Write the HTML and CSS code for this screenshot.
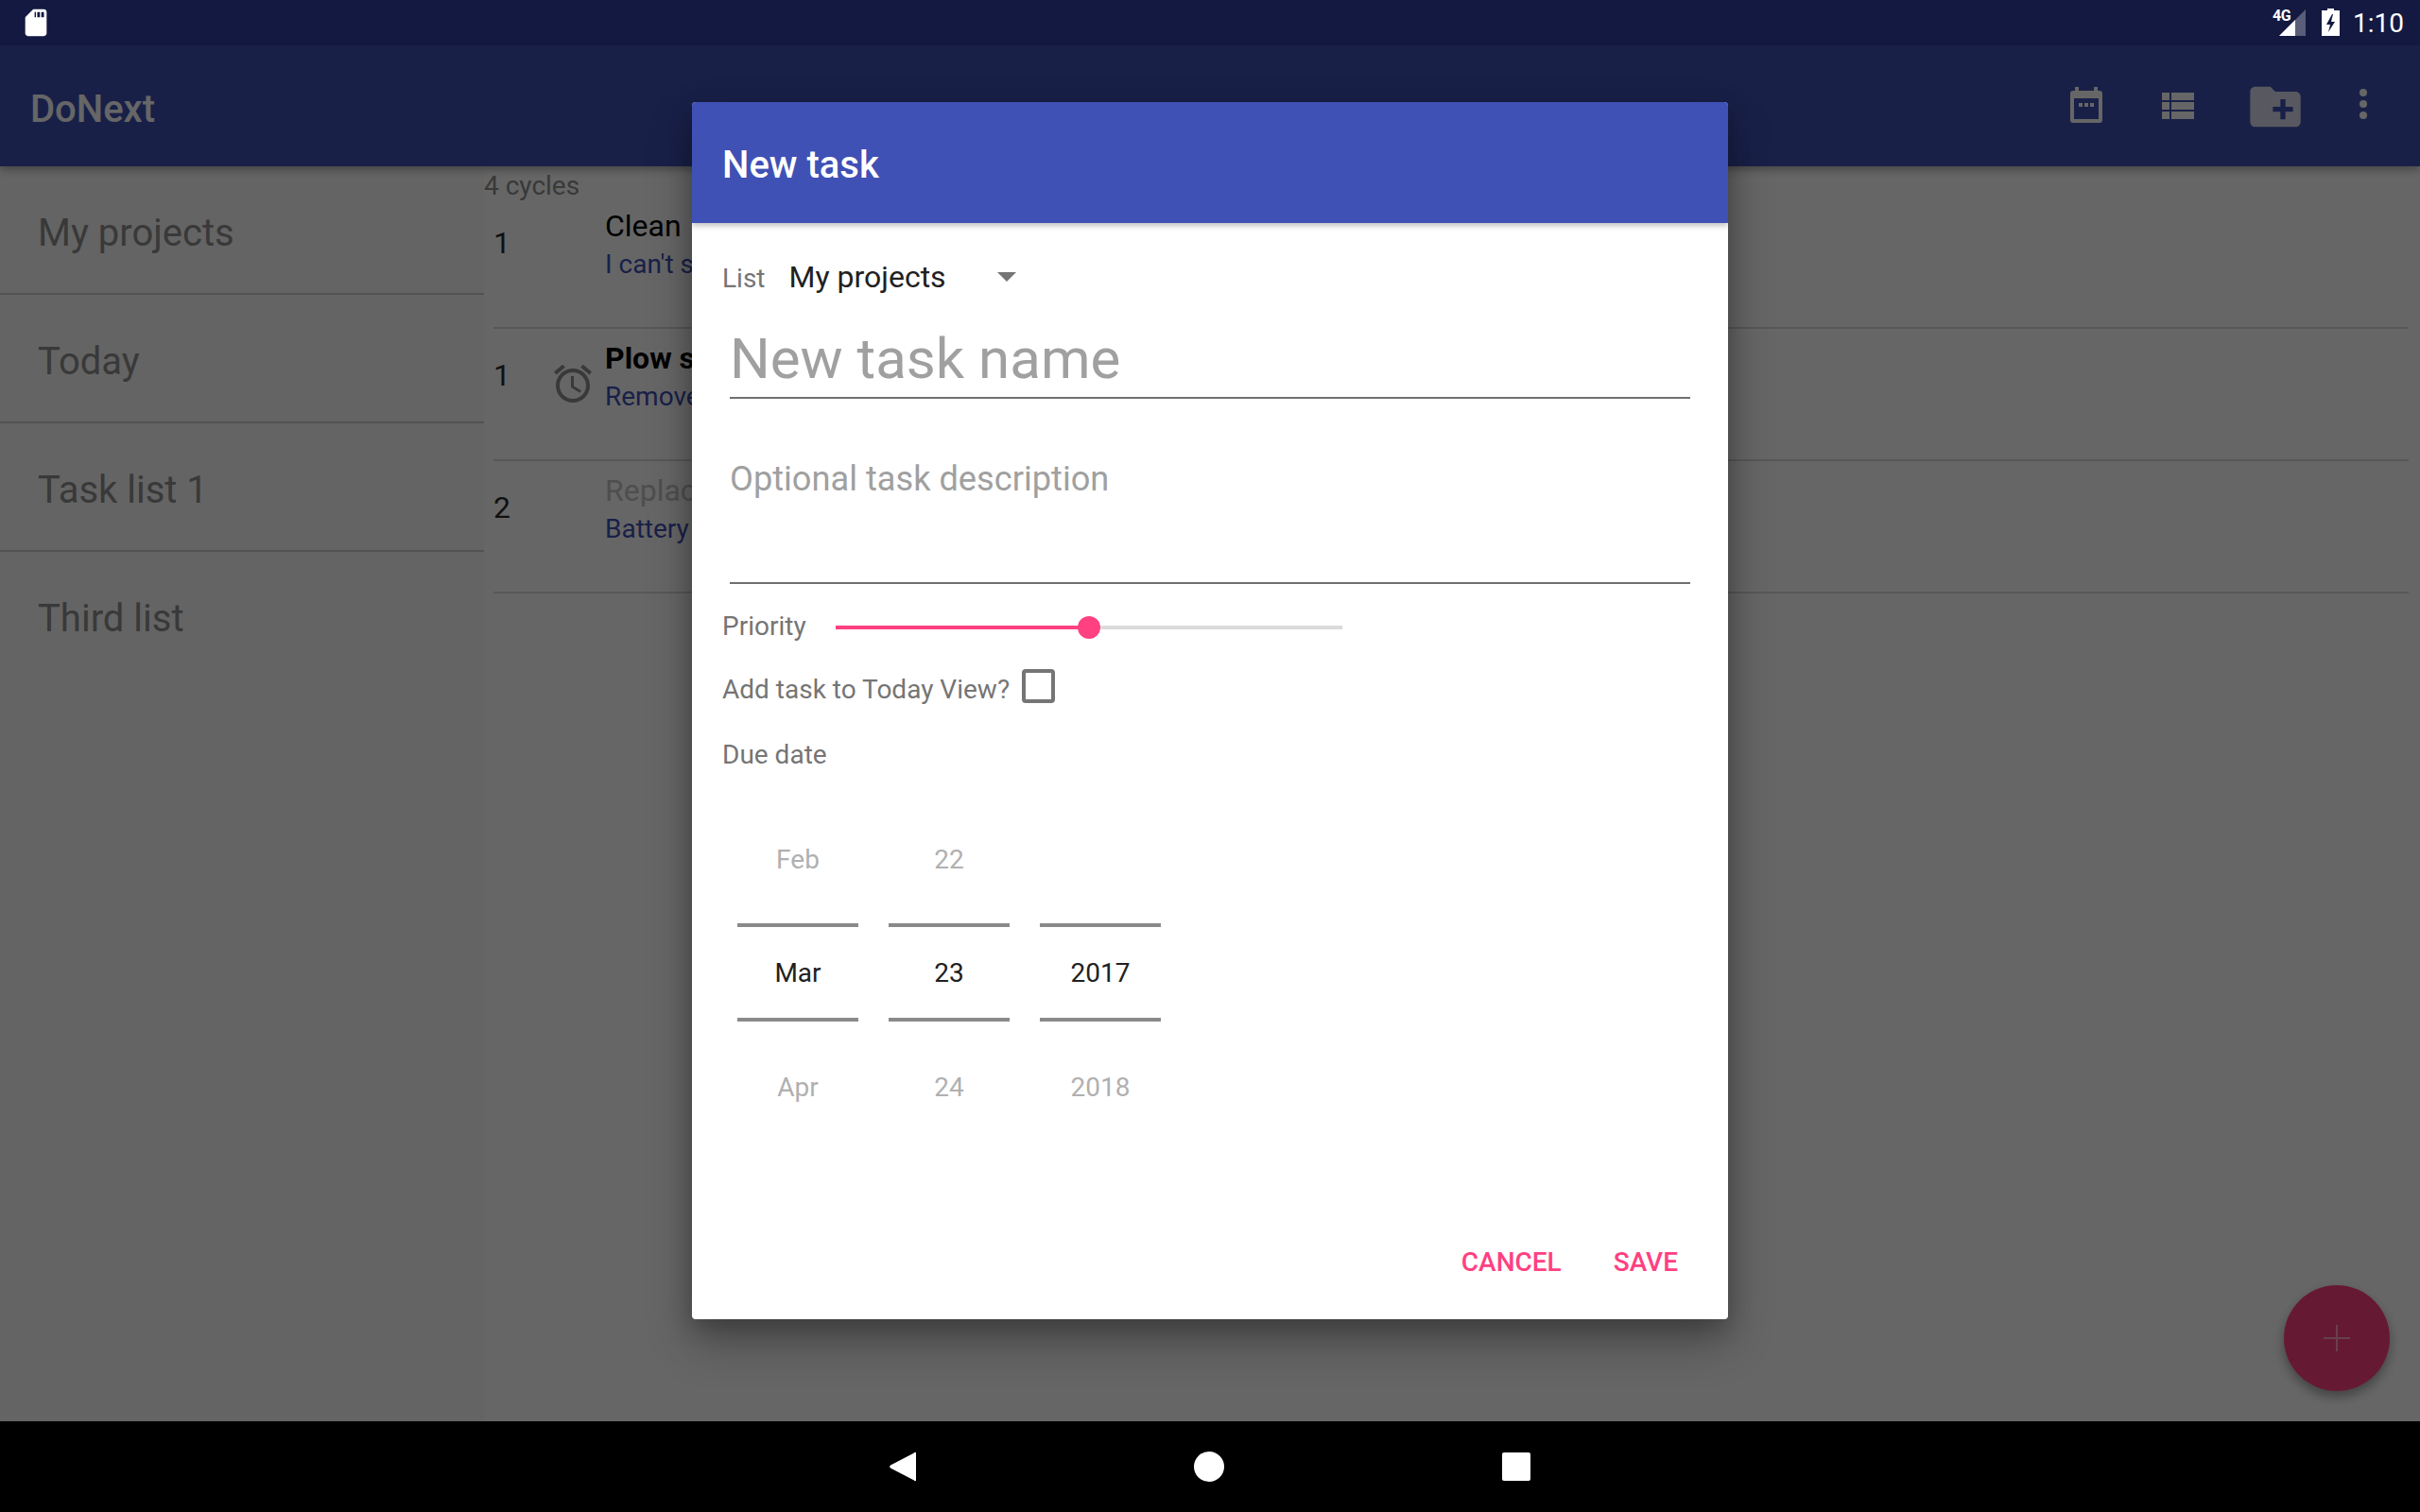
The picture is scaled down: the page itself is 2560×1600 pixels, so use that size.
FILE: index.html
```html
<!DOCTYPE html>
<html lang="en">
<head>
<meta charset="utf-8">
<title>DoNext</title>
<link rel="stylesheet" href="styles.css">
</head>
<body>
<div class="screen">
  <div class="statusbar">
    <svg class="sd" viewBox="0 0 24 24"><path d="M18 2h-8L4.02 8 4 20c0 1.1.9 2 2 2h12c1.1 0 2-.9 2-2V4c0-1.1-.9-2-2-2zm-6 6h-1V4h1v4zm3 0h-2V4h2v4zm3 0h-2V4h2v4z"/></svg>
    <div class="status-right">
      <div class="signal">
        <span class="net">4G</span>
        <svg viewBox="0 0 28 28" class="signal-svg"><path d="M28 0v28H0z" fill="#fff" fill-opacity=".3"/><path d="M17 11v17H0z" fill="#fff"/></svg>
      </div>
      <svg class="battery" viewBox="0 0 19 29"><path fill-rule="evenodd" d="M6 0h7v2h6v27H0V2h6zM11 6L5 17h4l-2 8 7-11h-4l2-8z" fill="#fff"/></svg>
      <span class="clock">1:10</span>
    </div>
  </div>

  <div class="app">
    <header class="toolbar">
      <span class="app-title">DoNext</span>
      <div class="actions">
        <svg class="ic-cal" viewBox="0 0 34 38"><path fill-rule="evenodd" d="M5 0h4v4h16V0h4v4h2a3 3 0 0 1 3 3v28a3 3 0 0 1-3 3H3a3 3 0 0 1-3-3V7a3 3 0 0 1 3-3h2zM4 12v22h26V12zM9 17h4v4H9zm6 0h4v4h-4zm6 0h4v4h-4z"/></svg>
        <svg class="ic-list" viewBox="0 0 24 24"><path d="M4 14h4v-4H4v4zm0 5h4v-4H4v4zM4 9h4V5H4v4zm5 5h12v-4H9v4zm0 5h12v-4H9v4zM9 5v4h12V5H9z"/></svg>
        <svg class="ic-folder" viewBox="0 0 24 24"><path d="M20 6h-8l-2-2H4c-1.11 0-1.99.89-1.99 2L2 18c0 1.11.89 2 2 2h16c1.11 0 2-.89 2-2V8c0-1.11-.89-2-2-2zm-1 8h-3v3h-2v-3h-3v-2h3V9h2v3h3v2z"/></svg>
        <svg class="ic-more" viewBox="0 0 8 32"><circle cx="4" cy="4" r="4"/><circle cx="4" cy="16" r="4"/><circle cx="4" cy="28" r="4"/></svg>
      </div>
    </header>
    <main class="content">
      <nav class="sidebar">
        <div class="list-row">My projects</div>
        <div class="list-row">Today</div>
        <div class="list-row">Task list 1</div>
        <div class="list-row list-row-last">Third list</div>
      </nav>
      <section class="tasks">
        <div class="cycles">4 cycles</div>
        <div class="task task-first">
          <span class="task-num">1</span>
          <span class="task-alarm"></span>
          <div class="task-text"><div class="task-title">Clean</div><div class="task-sub">I can't s</div></div>
        </div>
        <div class="task">
          <span class="task-num">1</span>
          <span class="task-alarm"><svg viewBox="0 0 24 24"><path d="M22 5.72l-4.6-3.86-1.29 1.53 4.6 3.86L22 5.72zM7.88 3.39L6.6 1.86 2 5.71l1.29 1.53 4.59-3.85zM12.5 8H11v6l4.75 2.85.75-1.23-4-2.37V8zM12 4c-4.97 0-9 4.03-9 9s4.02 9 9 9c4.97 0 9-4.03 9-9s-4.03-9-9-9zm0 16c-3.87 0-7-3.13-7-7s3.13-7 7-7 7 3.13 7 7-3.13 7-7 7z"/></svg></span>
          <div class="task-text"><div class="task-title task-bold">Plow s</div><div class="task-sub">Remove</div></div>
        </div>
        <div class="task">
          <span class="task-num">2</span>
          <span class="task-alarm"></span>
          <div class="task-text"><div class="task-title task-done">Replac</div><div class="task-sub">Battery</div></div>
        </div>
      </section>
    </main>
    <button class="fab"><svg viewBox="0 0 28 28"><path d="M13 0h2v13h13v2H15v13h-2V15H0v-2h13z"/></svg></button>
    <div class="scrim"></div>

    <div class="dialog">
      <div class="dialog-head">New task</div>
      <div class="dialog-body">
        <div class="row-list">
          <span class="label">List</span>
          <span class="select-value">My projects</span>
          <span class="select-arrow"></span>
        </div>
        <div class="field field-name"><span>New task name</span></div>
        <div class="field field-desc"><span>Optional task description</span></div>
        <div class="row-priority">
          <span class="label">Priority</span>
          <div class="slider"><div class="slider-fill"></div><div class="slider-thumb"></div></div>
        </div>
        <div class="row-today">
          <span class="label">Add task to Today View?</span>
          <span class="checkbox"></span>
        </div>
        <div class="row-due"><span class="label">Due date</span></div>
        <div class="picker">
          <div class="spin"><div class="spin-off">Feb</div><div class="spin-cur">Mar</div><div class="spin-off">Apr</div></div>
          <div class="spin"><div class="spin-off">22</div><div class="spin-cur">23</div><div class="spin-off">24</div></div>
          <div class="spin"><div class="spin-off"></div><div class="spin-cur">2017</div><div class="spin-off">2018</div></div>
        </div>
        <div class="dialog-actions">
          <span class="btn">CANCEL</span>
          <span class="btn">SAVE</span>
        </div>
      </div>
    </div>
  </div>

  <div class="navbar">
    <svg class="nav-back" viewBox="0 0 28 32"><path d="M26 1.5a1 1 0 0 1 2 .5v28a1 1 0 0 1-2 .5L1 17.500a2 2 0 0 1 0-3z" fill="#fff"/></svg>
    <span class="nav-home"></span>
    <span class="nav-recent"></span>
  </div>
</div>
</body>
</html>
```

FILE: styles.css
```css
* { box-sizing: border-box; }
html, body { margin: 0; padding: 0; }
body { font-family: Roboto, "Liberation Sans", sans-serif; background: #000; }
.screen { width: 2560px; height: 1600px; display: flex; flex-direction: column; overflow: hidden; }

.statusbar { height: 48px; flex: none; background: #131940; display: flex; align-items: center; justify-content: space-between; padding: 0 17px 0 21px; }
.sd { width: 34px; height: 34px; fill: #fff; }
.status-right { display: flex; align-items: center; }
.signal { position: relative; width: 28px; height: 28px; margin-right: 17px; margin-top: -1px; }
.signal-svg { display: block; width: 28px; height: 28px; }
.net { position: absolute; left: -7px; top: 0; color: #fff; font-size: 16px; line-height: 13px; font-weight: 700; letter-spacing: -.5px; }
.battery { width: 19px; height: 29px; margin-right: 14px; margin-top: -1px; }
.clock { color: #fff; font-size: 28px; line-height: 30px; margin-top: 2px; }

.app { position: relative; flex: 1; min-height: 0; display: flex; flex-direction: column; background: #fff; }
.toolbar { height: 128px; flex: none; background: #3f51b5; display: flex; align-items: center; justify-content: space-between; box-shadow: 0 4px 8px rgba(0,0,0,.3); position: relative; z-index: 1; padding: 0 56px 0 32px; }
.app-title { color: #fff; font-size: 40px; font-weight: 500; padding-top: 6px; }
.actions { display: flex; align-items: center; fill: #fff; }
.ic-cal { width: 34px; height: 38px; margin-right: 55px; margin-top: -2px; }
.ic-list { width: 48px; height: 48px; margin-right: 48px; }
.ic-folder { width: 64px; height: 64px; margin-right: 57px; margin-top: 2px; opacity: .82; }
.ic-more { width: 8px; height: 32px; margin-top: -4px; }

.content { flex: 1; min-height: 0; display: flex; }
.sidebar { width: 512px; flex: none; background: #fafafa; }
.list-row { height: 136px; display: flex; align-items: center; padding: 6px 0 0 40px; border-bottom: 2px solid #cdcdcd; font-size: 40px; color: #8f8f8f; }
.list-row-last { border-bottom: 0; padding-top: 4px; }
.tasks { flex: 1; min-width: 0; }
.cycles { height: 41px; font-size: 28px; line-height: 41px; color: #8f8f8f; }
.task { height: 140px; margin-left: 10px; margin-right: 12px; display: flex; align-items: center; padding-bottom: 40px; border-bottom: 2px solid #dadada; }
.task-first { height: 131px; padding-bottom: 50px; }
.task-num { width: 60px; font-size: 32px; color: #2b2b2b; }
.task-alarm { width: 58px; height: 48px; display: flex; margin-top: 18px; }
.task-alarm svg { width: 48px; height: 48px; fill: #8f8f8f; }
.task-text { white-space: nowrap; }
.task-title { font-size: 32px; line-height: 46px; color: #000; }
.task-bold { font-weight: 700; }
.task-done { color: #c4c4c4; }
.task-sub { font-size: 28px; line-height: 36px; color: #3f51b5; }

.fab { position: absolute; right: 32px; top: 1312px; width: 112px; height: 112px; border: 0; padding: 0; border-radius: 50%; background: #ff4081; box-shadow: 0 6px 12px rgba(0,0,0,.35); display: flex; align-items: center; justify-content: center; }
.fab svg { width: 28px; height: 28px; fill: #fff; opacity: .5; }

.scrim { position: absolute; inset: 0; z-index: 2; background: rgba(0,0,0,.6); }

.dialog { position: absolute; z-index: 3; left: 732px; top: 60px; width: 1096px; height: 1288px; background: #fff; border-radius: 4px; box-shadow: 0 24px 48px rgba(0,0,0,.3), 0 8px 24px rgba(0,0,0,.2); display: flex; flex-direction: column; overflow: hidden; }
.dialog-head { height: 128px; flex: none; background: #3f51b5; color: #fff; font-size: 40px; font-weight: 500; display: flex; align-items: center; padding: 5px 0 0 32px; box-shadow: 0 3px 6px rgba(0,0,0,.25); position: relative; }
.dialog-body { flex: 1; min-height: 0; padding: 0 32px; display: flex; flex-direction: column; }
.label { font-size: 28px; line-height: 36px; color: #757575; }
.row-list { display: flex; align-items: center; flex: none; height: 118px; padding-top: 1px; margin-top: -1px; }
.select-value { font-size: 32px; color: #212121; margin-left: 25px; width: 220px; margin-top: -4px; }
.select-arrow { width: 0; height: 0; border-left: 10px solid transparent; border-right: 10px solid transparent; border-top: 10px solid #757575; margin-top: -4px; }
.field { margin-left: 8px; margin-right: 8px; border-bottom: 2px solid #6f6f6f; flex: none; }
.field span { color: #a0a0a0; }
.field-name { height: 70px; font-size: 60px; line-height: 56px; margin-top: -1px; }
.field-desc { height: 196px; font-size: 36.2px; line-height: 44px; padding-top: 63px; }
.row-priority { display: flex; align-items: center; height: 46px; margin-top: 22px; flex: none; }
.slider { position: relative; width: 536px; height: 4px; margin-left: 31px; background: #dbdbdb; margin-top: 2px; }
.slider-fill { width: 268px; height: 4px; background: #ff4081; }
.slider-thumb { position: absolute; left: 256px; top: -10px; width: 24px; height: 24px; border-radius: 50%; background: #ff4081; }
.row-today { display: flex; align-items: center; height: 36px; margin-top: 26px; flex: none; }
.checkbox { width: 35px; height: 36px; border: 4px solid #757575; border-radius: 4px; margin-left: 13px; margin-top: -8px; }
.row-due { height: 36px; margin-top: 33px; flex: none; }
.picker { display: flex; gap: 32px; margin-left: 16px; margin-top: 40px; flex: none; }
.spin { width: 128px; text-align: center; font-size: 28px; }
.spin-off { height: 120px; line-height: 106px; color: #b0b0b0; }
.spin-off:last-child { line-height: 139px; height: 100px; }
.spin-cur { height: 104px; line-height: 98px; color: #212121; border-top: 4px solid #8a8a8a; border-bottom: 4px solid #8a8a8a; }
.dialog-actions { display: flex; justify-content: flex-end; gap: 55px; margin-top: auto; padding-bottom: 42px; padding-right: 21px; }
.btn { font-size: 28px; line-height: 36px; font-weight: 500; color: #ff4081; }

.navbar { height: 96px; flex: none; background: #000; display: flex; align-items: center; justify-content: center; }
.nav-back { width: 28px; height: 32px; margin-right: 294px; }
.nav-home { width: 32px; height: 32px; border-radius: 50%; background: #fff; margin-right: 294px; }
.nav-recent { width: 30px; height: 30px; border-radius: 2px; background: #fff; }
```
